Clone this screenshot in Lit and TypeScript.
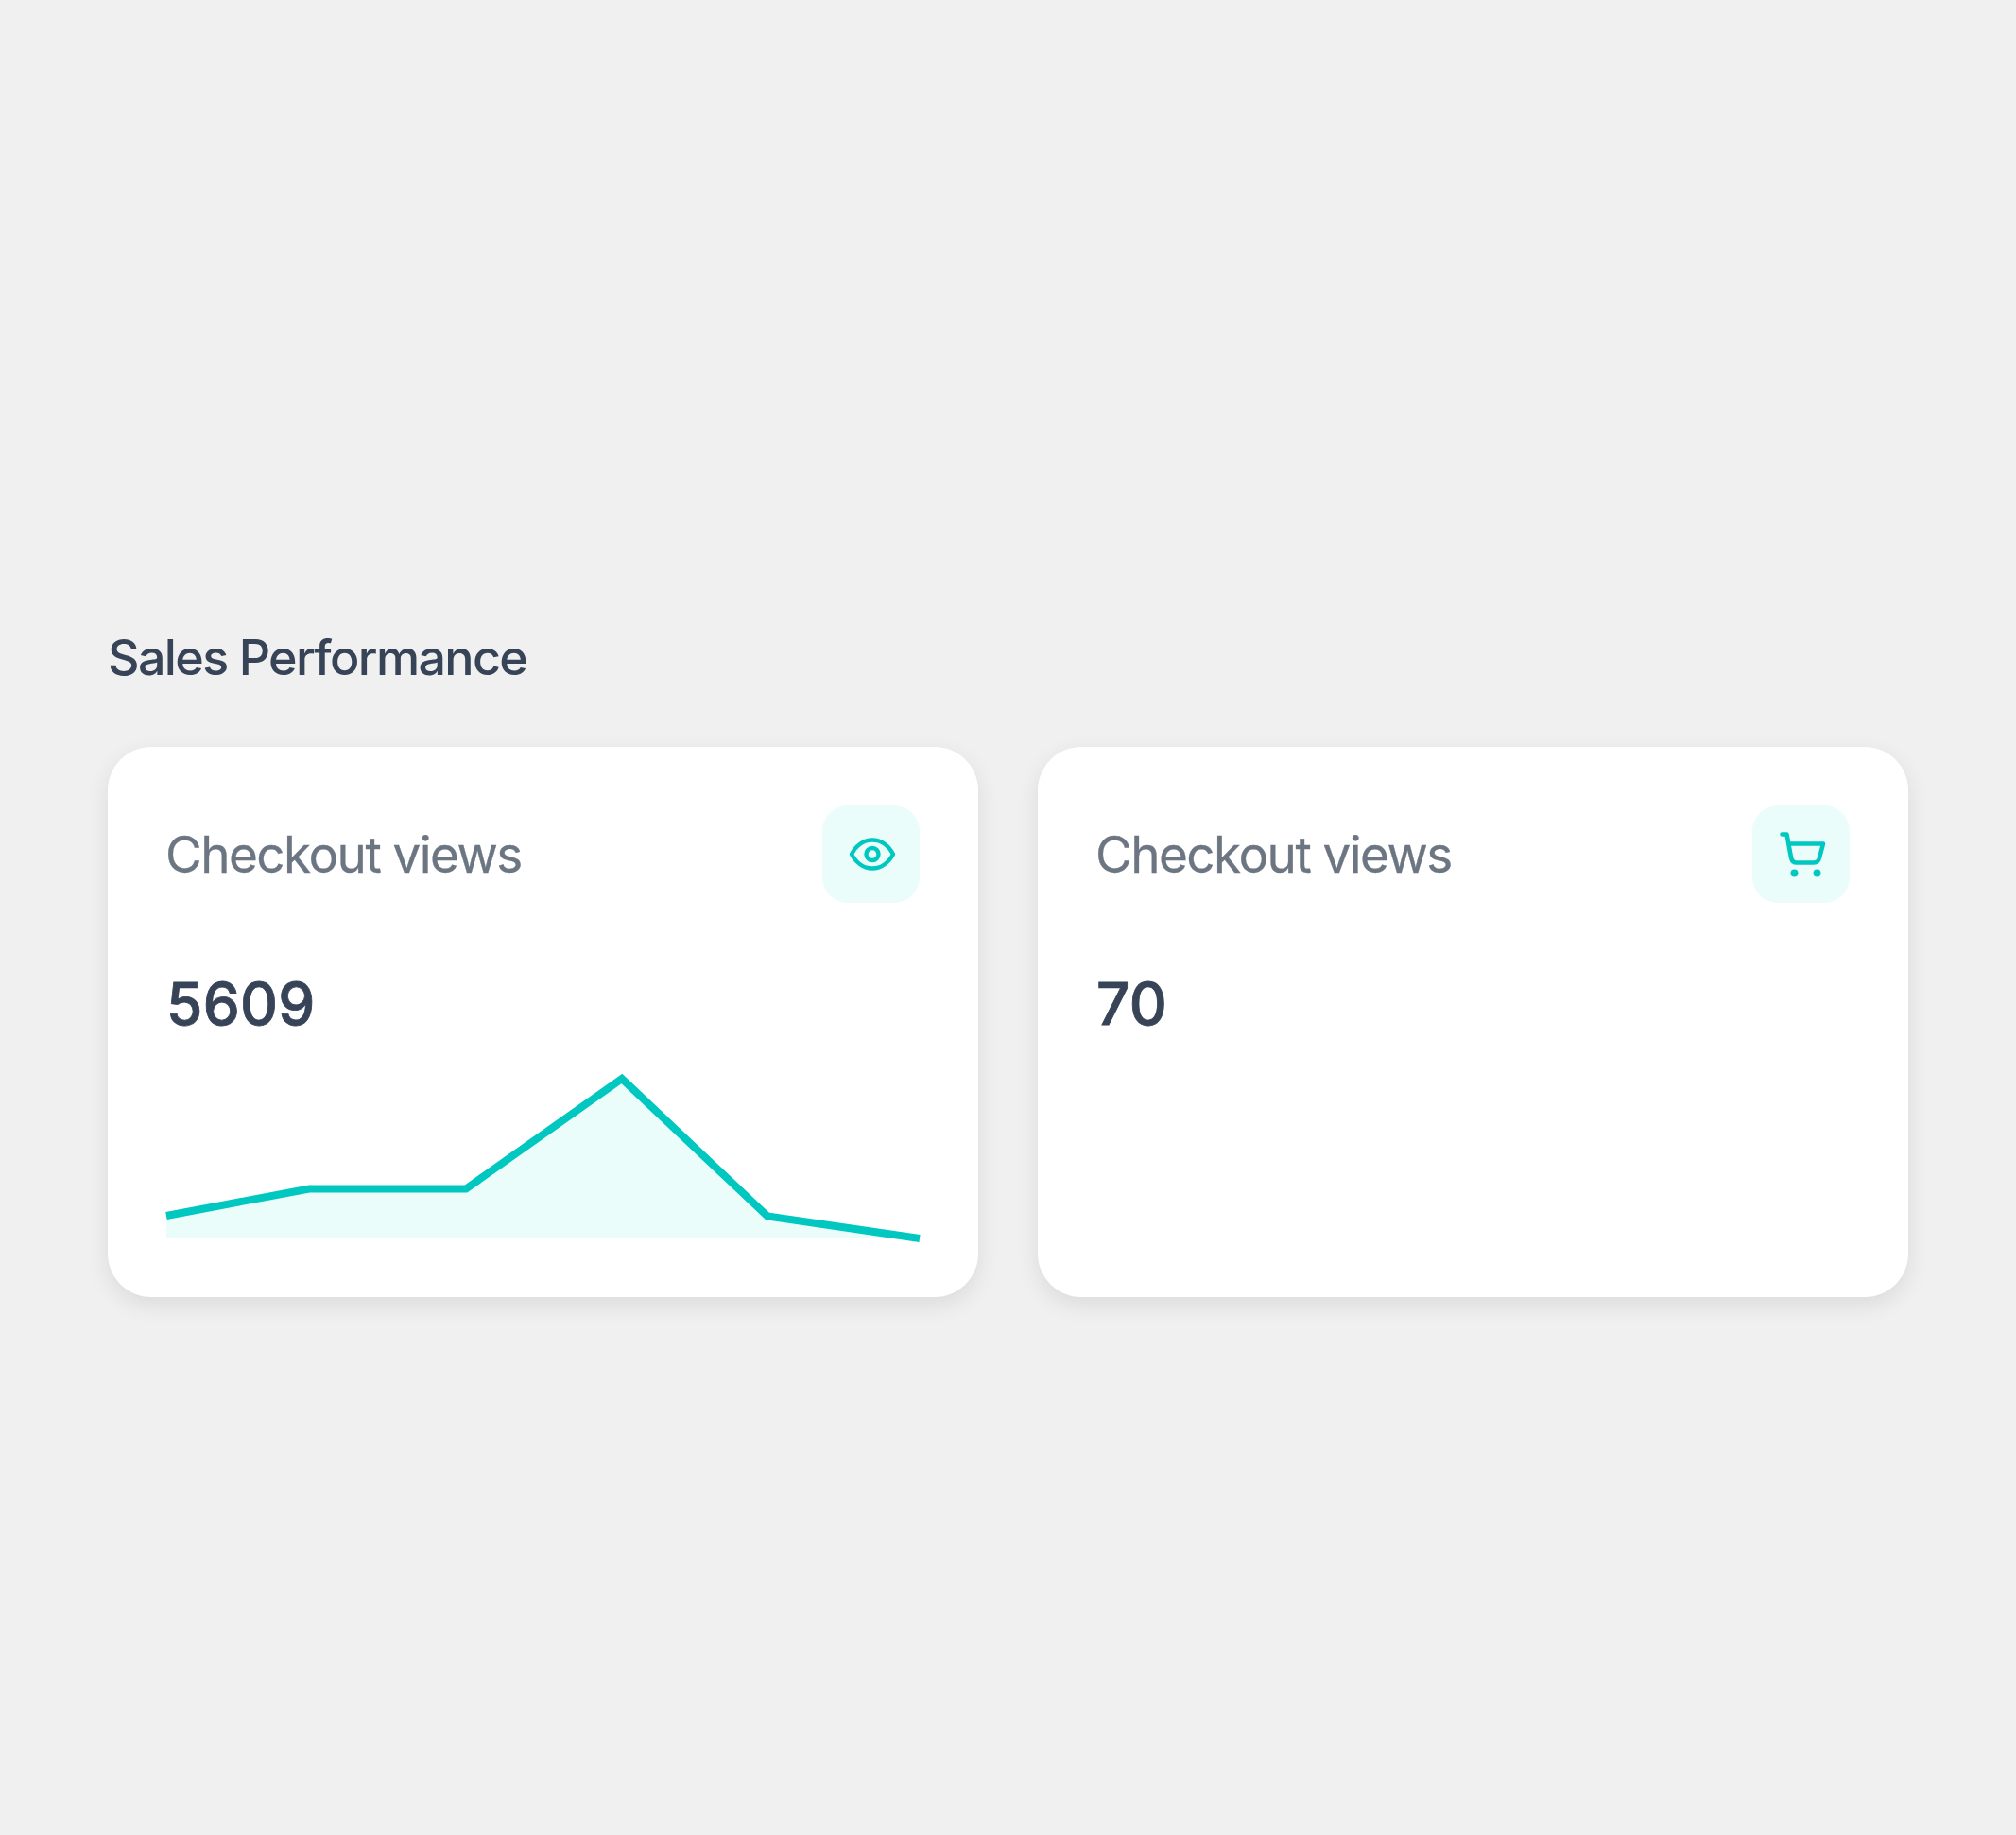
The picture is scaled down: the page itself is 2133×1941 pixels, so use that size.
import { LitElement, html, css, svg } from "lit";
import { customElement } from "lit/decorators.js";

const eye = svg`<svg class="ic" viewBox="0 0 64 64" fill="none" stroke="currentColor" stroke-width="4.4" stroke-linecap="round" stroke-linejoin="round"><path d="M11 31.5C15.2 23.5 22.8 16.5 33 16.5s17.8 7 22 15C50.8 39.5 43.2 46.5 33 46.5S15.2 39.5 11 31.5Z"/><circle cx="33" cy="31.5" r="6.5"/></svg>`;
const cart = svg`<svg class="ic" viewBox="0 0 64 64" fill="none" stroke="currentColor" stroke-width="4.6" stroke-linecap="round" stroke-linejoin="round"><path d="M11.5 10.5H16.5L21 35C21.6 38.5 24 40.5 27 40.5H45C48 40.5 50.2 38.5 51 35.5L55 20.5H19"/><circle cx="24.5" cy="51.5" r="4" fill="currentColor" stroke="none"/><circle cx="48.5" cy="51.5" r="4" fill="currentColor" stroke="none"/></svg>`;

const chart = svg`<svg class="chart" viewBox="0 0 797 180" width="797" height="180">
  <polygon points="0,155 151,126.5 317,126.5 482,10 636,155.5 797,178 0,178" fill="#eafdfb"/>
  <polyline points="0,155 151,126.5 317,126.5 482,10 636,155.5 797,179" fill="none" stroke="#00c7c0" stroke-width="8"/>
</svg>`;

@customElement("app-root")
export class AppRoot extends LitElement {
  static styles = css`
    :host { display: block; min-height: 1941px; background: #f0f0f0; box-sizing: border-box; padding: 665px 114px 0; font-family: Inter, "Liberation Sans", sans-serif; }
    h1 { margin: 0 0 63px; font-size: 52px; line-height: 62px; font-weight: 500; letter-spacing: -1.65px; color: #374357; }
    .cards { display: grid; grid-template-columns: 921px 921px; gap: 63px; }
    .card { height: 582px; box-sizing: border-box; padding: 62px; background: #fff; border-radius: 46px; box-shadow: 0 8px 24px rgba(0,0,0,.09); position: relative; }
    .top { display: flex; justify-content: space-between; align-items: center; }
    .label { font-size: 53px; font-weight: 400; letter-spacing: -1.55px; color: #6c7682; margin-left: -1px; -webkit-text-stroke: 0.3px #6c7682; }
    .box { width: 103px; height: 103px; border-radius: 27px; background: #eafdfb; color: #00c7c0; display: flex; align-items: center; justify-content: center; }
    .ic { width: 64px; height: 64px; display: block; }
    .num { margin-top: 68px; font-size: 62px; line-height: 78px; font-weight: 500; letter-spacing: 0.3px; color: #374357; -webkit-text-stroke: 0.8px #374357; }
    .chart { display: block; margin-top: 30px; overflow: visible; }
  `;
  render() {
    return html`
      <h1>Sales Performance</h1>
      <div class="cards">
        <div class="card">
          <div class="top"><span class="label">Checkout views</span><div class="box">${eye}</div></div>
          <div class="num">5609</div>
          ${chart}
        </div>
        <div class="card">
          <div class="top"><span class="label">Checkout views</span><div class="box">${cart}</div></div>
          <div class="num">70</div>
        </div>
      </div>
    `;
  }
}
